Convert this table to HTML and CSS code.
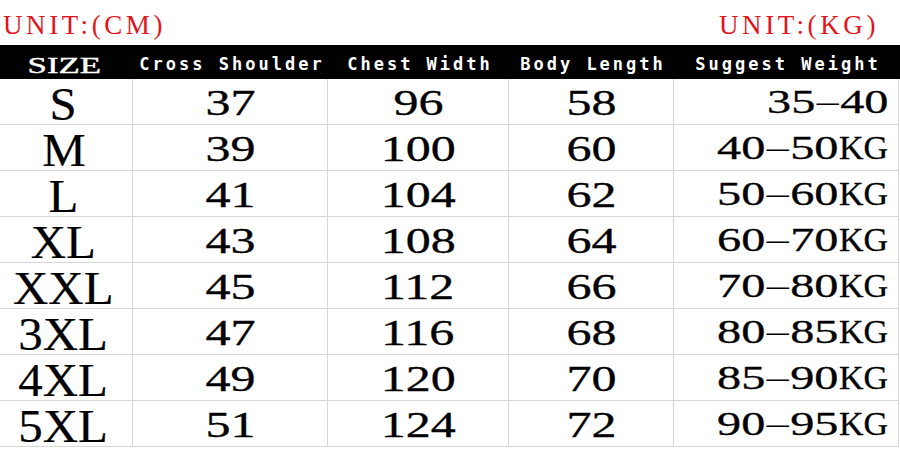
FILE: index.html
```html
<!DOCTYPE html>
<html>
<head>
<meta charset="utf-8">
<link rel="stylesheet" href="styles.css">
</head>
<body>
<div class="page">
  <div class="units">
    <span class="unit">UNIT:(CM)</span>
    <span class="unit">UNIT:(KG)</span>
  </div>
  <div class="head">
    <div class="h h-size"><span>SIZE</span></div>
    <div class="h"><span>Cross Shoulder</span></div>
    <div class="h"><span>Chest Width</span></div>
    <div class="h"><span>Body Length</span></div>
    <div class="h"><span>Suggest Weight</span></div>
  </div>
  <div class="table">
    <div class="c sz"><span>S</span></div><div class="c num"><span>37</span></div><div class="c num"><span>96</span></div><div class="c num"><span>58</span></div><div class="c wt"><span class="d">35<span class="m">–</span>40</span></div>
    <div class="c sz"><span>M</span></div><div class="c num"><span>39</span></div><div class="c num"><span>100</span></div><div class="c num"><span>60</span></div><div class="c wt"><span class="d">40<span class="m">–</span>50</span>KG</div>
    <div class="c sz"><span>L</span></div><div class="c num"><span>41</span></div><div class="c num"><span>104</span></div><div class="c num"><span>62</span></div><div class="c wt"><span class="d">50<span class="m">–</span>60</span>KG</div>
    <div class="c sz"><span>XL</span></div><div class="c num"><span>43</span></div><div class="c num"><span>108</span></div><div class="c num"><span>64</span></div><div class="c wt"><span class="d">60<span class="m">–</span>70</span>KG</div>
    <div class="c sz"><span>XXL</span></div><div class="c num"><span>45</span></div><div class="c num"><span>112</span></div><div class="c num"><span>66</span></div><div class="c wt"><span class="d">70<span class="m">–</span>80</span>KG</div>
    <div class="c sz"><span>3XL</span></div><div class="c num"><span>47</span></div><div class="c num"><span>116</span></div><div class="c num"><span>68</span></div><div class="c wt"><span class="d">80<span class="m">–</span>85</span>KG</div>
    <div class="c sz"><span>4XL</span></div><div class="c num"><span>49</span></div><div class="c num"><span>120</span></div><div class="c num"><span>70</span></div><div class="c wt"><span class="d">85<span class="m">–</span>90</span>KG</div>
    <div class="c sz"><span>5XL</span></div><div class="c num"><span>51</span></div><div class="c num"><span>124</span></div><div class="c num"><span>72</span></div><div class="c wt"><span class="d">90<span class="m">–</span>95</span>KG</div>
  </div>
</div>
</body>
</html>
```

FILE: styles.css
```css
html, body {
  margin: 0;
  padding: 0;
  background: #fff;
}
.page {
  width: 900px;
  height: 457px;
  overflow: hidden;
  font-family: "Liberation Serif", serif;
  color: #000;
}
.units {
  height: 45px;
  display: flex;
  justify-content: space-between;
  padding: 0 21px 0 3px;
  box-sizing: border-box;
}
.unit {
  font-family: "Liberation Serif", serif;
  font-size: 27px;
  line-height: 45px;
  padding-top: 3px;
  letter-spacing: 3.6px;
  color: #e3141c;
}
.head {
  height: 34px;
  background: #000;
  display: grid;
  grid-template-columns: 133px 195px 181px 165px 225px;
}
.h {
  color: #fff;
  text-align: center;
  font-family: "DejaVu Sans Mono", monospace;
  font-weight: bold;
  font-size: 17px;
  letter-spacing: 3px;
  line-height: 34px;
  padding-top: 2px;
  box-sizing: border-box;
  white-space: nowrap;
}
.h span {
  margin-right: -3px;
}
.h-size {
  font-family: "Liberation Serif", serif;
  font-weight: normal;
  font-size: 24px;
  letter-spacing: 0;
  padding-top: 3px;
  padding-right: 5px;
}
.h-size span {
  display: inline-block;
  margin: 0;
  transform: scaleX(1.45);
  -webkit-text-stroke: 0.4px #fff;
}
.table {
  display: grid;
  grid-template-columns: 133px 195px 181px 165px 225px;
  grid-auto-rows: 46px;
}
.c {
  box-sizing: border-box;
  border-right: 1px solid #d6d6d6;
  border-bottom: 1px solid #d6d6d6;
  white-space: nowrap;
}
.sz {
  text-align: center;
  font-size: 47px;
  line-height: 40px;
  padding-top: 5px;
  padding-right: 5px;
}
.sz span {
  display: inline-block;
  transform: scaleX(1.04);
  -webkit-text-stroke: 0.2px #000;
}
.num {
  text-align: center;
  font-size: 35px;
  line-height: 38px;
  padding-top: 6px;
}
.num span {
  display: inline-block;
  transform: scaleX(1.43);
  -webkit-text-stroke: 0.3px #000;
}
.wt {
  text-align: right;
  font-size: 34px;
  line-height: 36px;
  padding-top: 5px;
  padding-right: 10px;
  -webkit-text-stroke: 0.3px #000;
}
.wt .d {
  display: inline-block;
  transform: scaleX(1.42);
  transform-origin: right center;
}
.wt .m {
  display: inline-block;
  font-size: 31px;
  margin: 0 1px;
  vertical-align: 1px;
  -webkit-text-stroke: 0;
}
```
